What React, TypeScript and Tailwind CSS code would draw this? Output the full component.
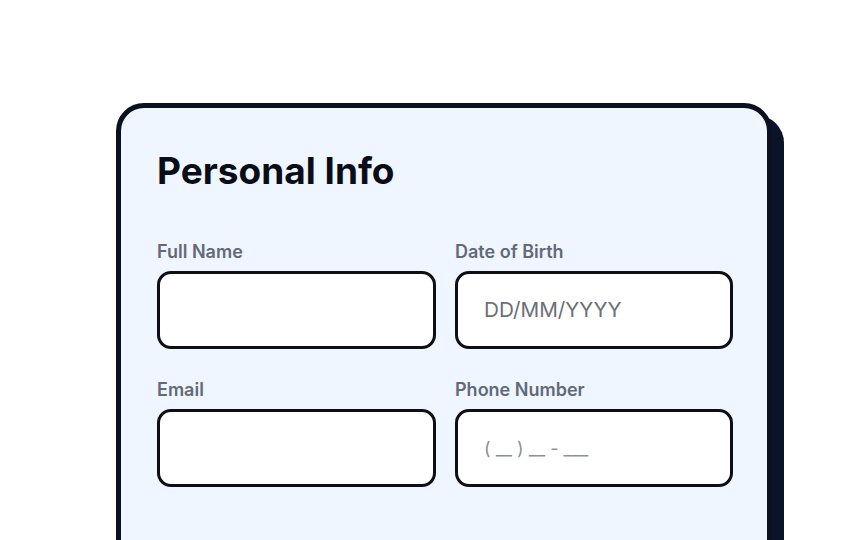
export default function App() {
  const fields = [
    { label: "Full Name", placeholder: "" },
    { label: "Date of Birth", placeholder: "DD/MM/YYYY" },
    { label: "Email", placeholder: "" },
    { label: "Phone Number", placeholder: "( __ ) __ - ___", small: true },
  ];

  return (
    <div
      className="w-[864px] h-[540px] overflow-hidden bg-white pl-[116px] pt-[103px]"
      style={{ fontFamily: "Inter, 'Noto Sans', sans-serif" }}
    >
      <div className="w-[656px] h-[500px] rounded-[28px] border-[5px] border-[#0b1120] bg-[#eff6ff] pt-[43px] pl-[36px] pr-[34px] shadow-[12px_12px_0_0_#0b1328]">
        <h2 className="text-[37px] leading-[40px] font-bold text-[#0a0d17]">Personal Info</h2>

        <div className="mt-[49px] grid grid-cols-[279px_278px] gap-x-[19px] gap-y-[29px]">
          {fields.map((f) => (
            <div key={f.label}>
              <label className="block text-[18px] leading-[24px] font-semibold text-[#626a78]">
                {f.label}
              </label>
              <div className="mt-[7px] h-[78px] rounded-[14px] border-[3px] border-[#0e0f14] bg-white flex items-center pl-[26px]">
                {f.placeholder && (
                  <span
                    className={
                      f.small
                        ? "text-[18px] text-[#8a8f98] whitespace-pre"
                        : "text-[20.7px] text-[#6b6f76]"
                    }
                  >
                    {f.placeholder}
                  </span>
                )}
              </div>
            </div>
          ))}
        </div>
      </div>
    </div>
  );
}
